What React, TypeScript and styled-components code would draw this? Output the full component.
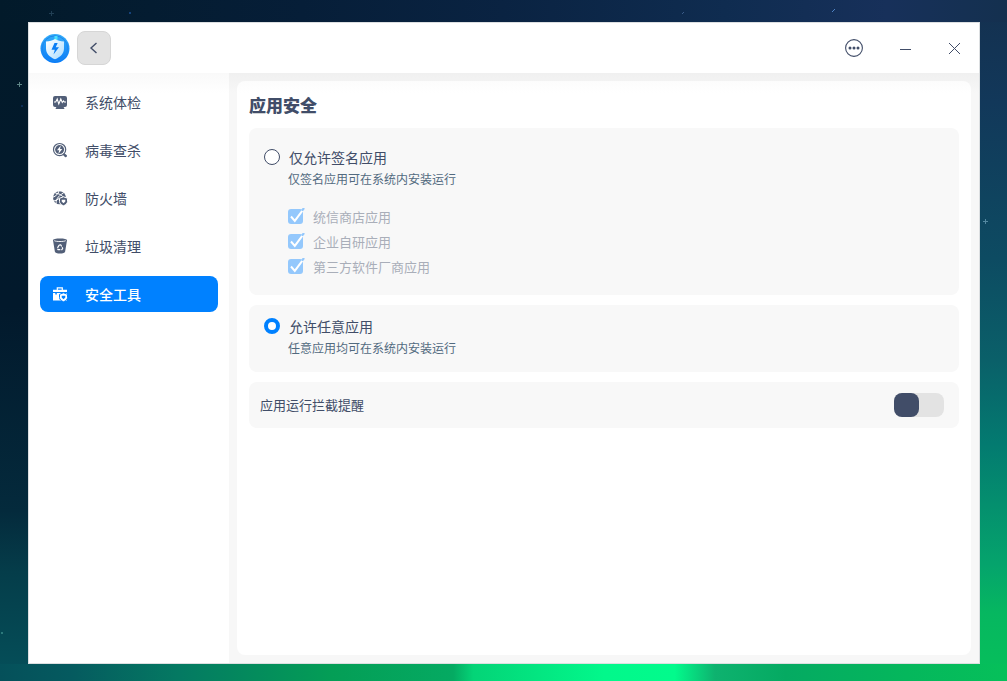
import React, { useState } from "react";
import styled, { createGlobalStyle } from "styled-components";

const ink = "#414d68";
const accent = "#0081ff";

const GlobalStyle = createGlobalStyle`
  * { box-sizing: border-box; }
  body {
    margin: 0;
    font-family: "Noto Sans CJK SC", "Noto Sans", sans-serif;
    color: ${ink};
  }
  button { font: inherit; color: inherit; border: 0; padding: 0; background: none; cursor: pointer; }
`;

const Desktop = styled.div`
  position: relative;
  display: flex;
  min-height: 100vh;
  padding: 22px 27px 17px 28px;
  overflow: hidden;
  background:
    linear-gradient(90deg, #021a2a 0%, #061e38 30%, #0a2342 50%, #0f2c50 72%, #17305a 88%, #14304f 100%) top / 100% 22px no-repeat,
    linear-gradient(90deg, #05505a 0%, #055a5f 7%, #047a62 18%, #049e56 33%, #05aa62 45%, #04d477 47%, #02f88b 60%, #02fb8c 67%, #0eb26f 71%, #05aa62 78%, #05b75c 90%, #06c05a 100%) bottom / 100% 17px no-repeat,
    linear-gradient(180deg, #021a2a 0%, #02192c 45%, #042a3c 75%, #053d4a 84%, #05505a 100%) left / 28px 100% no-repeat,
    linear-gradient(180deg, #14304f 0%, #12385a 15%, #0d4b62 38%, #0a6069 53%, #037a70 65%, #05a46c 83%, #06b760 90%, #06c05a 100%) right / 27px 100% no-repeat,
    #04303f;
`;

const Stars = styled.svg`
  position: absolute;
  inset: 0;
  width: 100%;
  height: 100%;
  pointer-events: none;
`;

const Window = styled.div`
  position: relative;
  flex: 1;
  min-width: 0;
  display: flex;
  flex-direction: column;
  border: 1px solid #dcdfe1;
  background: #fff;
`;

const TitleBar = styled.header`
  display: flex;
  align-items: center;
  height: 50px;
  padding-left: 11px;
  gap: 7px;
`;

const Logo = styled.svg`
  width: 30px;
  height: 30px;
`;

const BackButton = styled.button`
  display: grid;
  place-items: center;
  width: 34px;
  height: 34px;
  border: 1px solid #d6d6d6;
  border-radius: 8px;
  background: #e3e3e3;
`;

const WindowControls = styled.div`
  display: flex;
  height: 100%;
  margin-left: auto;
`;

const ControlButton = styled.button`
  display: grid;
  place-items: center;
  width: 50px;
`;

const Body = styled.div`
  flex: 1;
  display: flex;
`;

const Sidebar = styled.nav`
  flex: 0 0 200px;
  display: flex;
  flex-direction: column;
  gap: 12px;
  padding: 11px;
  background: linear-gradient(180deg, #f9f9f9, #fff 20px);
`;

const NavItem = styled.a<{ $active: boolean }>`
  display: flex;
  align-items: center;
  gap: 17px;
  height: 36px;
  padding: 0 12px;
  border-radius: 8px;
  font-size: 14px;
  line-height: 20px;
  font-weight: ${(p) => (p.$active ? 500 : 400)};
  text-decoration: none;
  color: ${(p) => (p.$active ? "#fff" : ink)};
  background: ${(p) => (p.$active ? accent : "transparent")};
`;

const NavIcon = styled.svg<{ $active: boolean }>`
  flex: none;
  width: 16px;
  height: 16px;
  color: ${(p) => (p.$active ? "#fff" : "#525f78")};
`;

const Main = styled.main`
  flex: 1;
  min-width: 0;
  display: flex;
  padding: 8px;
  background: linear-gradient(180deg, #f0f0f0, #f7f7f7 20px);
`;

const Page = styled.section`
  flex: 1;
  display: flex;
  flex-direction: column;
  gap: 10px;
  padding: 12px;
  border-radius: 8px;
  background: linear-gradient(180deg, #fcfcfc, #fff 12px);
`;

const Title = styled.h1`
  margin: 0;
  padding-bottom: 2px;
  font-size: 17px;
  line-height: 23px;
  font-weight: 900;
`;

const Card = styled.div<{ $pad: string }>`
  padding: ${(p) => p.$pad};
  border-radius: 8px;
  background: #f8f8f8;
`;

const RadioRow = styled.label`
  display: flex;
  align-items: center;
  gap: 9px;
  font-size: 14px;
  line-height: 22px;
`;

const Radio = styled.input`
  appearance: none;
  width: 16px;
  height: 16px;
  margin: 0;
  border: 1px solid ${ink};
  border-radius: 50%;
  background: #fff;
  &:checked {
    border: 4px solid ${accent};
  }
`;

const Description = styled.p`
  margin: 0;
  padding-left: 24px;
  font-size: 12px;
  line-height: 22px;
  color: #526a7f;
`;

const CheckList = styled.div`
  display: flex;
  flex-direction: column;
  padding: 14px 0 0 24px;
`;

const CheckRow = styled.label`
  display: flex;
  align-items: center;
  gap: 8px;
  font-size: 13px;
  line-height: 25px;
  color: #a9aeb9;
`;

const CheckBox = styled.span`
  display: grid;
  width: 17px;
  height: 17px;
  > * { grid-area: 1 / 1; }
  input { margin: 0; opacity: 0; }
  svg { pointer-events: none; }
`;

const SwitchRow = styled.label`
  display: flex;
  align-items: center;
  justify-content: space-between;
  font-size: 13px;
  line-height: 24px;
`;

const Switch = styled.input`
  appearance: none;
  display: flex;
  width: 50px;
  height: 24px;
  margin: 0;
  border-radius: 8px;
  background: #e3e3e3;
  &::before {
    content: "";
    width: 25px;
    height: 24px;
    border-radius: 8px;
    background: ${ink};
  }
  &:checked {
    justify-content: flex-end;
  }
  &:checked::before {
    background: ${accent};
  }
`;

const miniShield = "M11.500 6.800 15.500 8.300v3.200c0 2-1.600 3.300-4 4.300-2.400-1-4-2.300-4-4.300V8.300z";
const miniHeart = "M9.700 9.800h3.600v1.600l-1.800 1.900-1.800-1.900z";

const icons = {
  health: (
    <>
      <path fill="currentColor" d="M3 2h10a2 2 0 0 1 2 2v7a2 2 0 0 1-2 2h-1.500l.8 1v1H3.700v-1l.8-1H3a2 2 0 0 1-2-2V4a2 2 0 0 1 2-2z" />
      <path fill="none" stroke="#fff" strokeWidth="1.100" d="M2 8h1.700l1.500-3 1.600 5 2-5 1.500 3.500L11.500 7l.8 1H14" />
    </>
  ),
  virus: (
    <>
      <circle cx="7.600" cy="7.600" r="6.100" fill="none" stroke="currentColor" strokeWidth="1.200" />
      <circle cx="7.600" cy="7.600" r="4.500" fill="currentColor" />
      <path fill="#fff" d="M8.800 3.400 5 8.300h2.200l-.9 3.700 4-4.900H8z" />
      <path stroke="currentColor" strokeWidth="2.400" strokeLinecap="round" d="m12.200 12.600 1.600 1.400" />
    </>
  ),
  firewall: (
    <>
      <circle cx="7.500" cy="7.800" r="6.500" fill="currentColor" />
      <g fill="none" stroke="#fff" strokeWidth="1">
        <path d="M1 7.200c3-1.200 5-3 6-6.200M3.500 3.200c3.500.3 6.500 1.800 8.500 4.500M4.200 14.500c-.8-4 1.500-8.500 7.300-11.500M1 10.800c2.500 0 4.500-.8 6.500-2.800" />
      </g>
      <path fill="currentColor" stroke="#fff" strokeWidth="1" d={miniShield} />
      <path fill="#fff" d={miniHeart} />
    </>
  ),
  trash: (
    <>
      <path fill="currentColor" d="M1 2.300C1 1 4 .5 8 .5s7 .5 7 1.800l-1.900 11.400c-.2 1.200-2.300 1.800-5.100 1.800s-4.900-.6-5.100-1.800z" />
      <path fill="none" stroke="#fff" strokeWidth=".9" d="M2.300 2.700c1.700 1.100 9.700 1.100 11.400 0" />
      <path fill="none" stroke="#fff" strokeWidth="1.200" strokeLinejoin="round" strokeDasharray="3.400 .9" d="M7.300 6.800h1.400l2 3.500-.8 1.400H6.100l-.8-1.400z" />
    </>
  ),
  tools: (
    <>
      <path fill="none" stroke="currentColor" strokeWidth="1.200" d="M5.300 4V1.800h5V4" />
      <path fill="currentColor" d="M1 3.700h14v2.400H1zM1 7h2.300v1.400h1.500V7h10.200v7.500H1z" />
      <path fill="currentColor" stroke={accent} strokeWidth="1" d={miniShield} />
      <path fill={accent} d={miniHeart} />
    </>
  ),
};

const navItems: { id: keyof typeof icons; label: string }[] = [
  { id: "health", label: "系统体检" },
  { id: "virus", label: "病毒查杀" },
  { id: "firewall", label: "防火墙" },
  { id: "trash", label: "垃圾清理" },
  { id: "tools", label: "安全工具" },
];

const sources = ["统信商店应用", "企业自研应用", "第三方软件厂商应用"];

function AppLogo() {
  return (
    <Logo viewBox="0 0 30 30" aria-hidden="true">
      <defs>
        <linearGradient id="disc" x1="0" y1="0" x2="0" y2="1">
          <stop offset="0" stopColor="#36aef8" />
          <stop offset="1" stopColor="#067bfa" />
        </linearGradient>
        <linearGradient id="shield" x1="0" y1="0" x2="1" y2="1">
          <stop offset="0" stopColor="#ffffff" />
          <stop offset="1" stopColor="#a9dcff" />
        </linearGradient>
      </defs>
      <circle cx="15" cy="15.500" r="14.500" fill="url(#disc)" />
      <circle cx="15" cy="15.500" r="12.700" fill="none" stroke="#1d86ee" strokeWidth="1" />
      <path d="M16 3v4" stroke="#4de0fb" strokeWidth="3" />
      <path fill="url(#shield)" d="M15 6c2.500 1.500 5.500 2.300 9 2.500v7c0 5-3.500 8.500-9 10.800C9.500 24 6 20.500 6 15.500v-7C9.500 8.300 12.500 7.500 15 6z" />
      <path fill="#087df5" d="m14.500 10-3 6.800h3.300l-1.300 4.700 5.500-7.300h-3.300l2-4.200z" />
    </Logo>
  );
}

function CheckMark() {
  return (
    <svg width="17" height="17" viewBox="0 0 17 17" aria-hidden="true">
      <rect x="0" y="1" width="15" height="15" rx="3" fill="#94c8fc" />
      <path d="m3 8.500 3.800 4.300 8.200-11" fill="none" stroke="#fff" strokeWidth="2" />
      <path d="m14.500 2 1-1.200" stroke="#94c8fc" strokeWidth="2.200" strokeLinecap="round" />
    </svg>
  );
}

export default function App() {
  const [policy, setPolicy] = useState("any");
  const [notify, setNotify] = useState(false);
  const [active, setActive] = useState("tools");

  return (
    <>
      <GlobalStyle />
      <Desktop>
        <Stars aria-hidden="true">
          <path d="M17 84.500h5M19.500 82v5" stroke="#5f8688" />
          <path d="M49 13.500h5M51.500 11v5" stroke="#213f54" />
          <circle cx="130" cy="13" r="1" fill="#1d4f92" />
          <circle cx="22" cy="106" r="1" fill="#123464" />
          <path d="m832 12 3-3" stroke="#4f83c4" />
          <path d="m682 14 2-2" stroke="#3a5c8a" />
          <path d="M983 221.500h5M985.500 219v5" stroke="#5488a0" />
          <circle cx="2" cy="633" r="1" fill="#3a8a88" />
        </Stars>
        <Window>
          <TitleBar>
            <AppLogo />
            <BackButton aria-label="返回">
              <svg width="16" height="16" fill="none" stroke={ink} strokeWidth="1.400" aria-hidden="true">
                <path d="M10.500 3 5 8l5.500 5" />
              </svg>
            </BackButton>
            <WindowControls>
              <ControlButton aria-label="菜单">
                <svg width="18" height="18" fill={ink} aria-hidden="true">
                  <circle cx="9" cy="9" r="8.400" fill="none" stroke={ink} strokeWidth="1.100" />
                  <circle cx="5" cy="9" r="1.500" />
                  <circle cx="9" cy="9" r="1.500" />
                  <circle cx="13" cy="9" r="1.500" />
                </svg>
              </ControlButton>
              <ControlButton aria-label="最小化">
                <svg width="16" height="16" stroke={ink} aria-hidden="true">
                  <path d="M4 9.500h11" />
                </svg>
              </ControlButton>
              <ControlButton aria-label="关闭">
                <svg width="16" height="16" stroke={ink} aria-hidden="true">
                  <path d="m3 3 11 11M14 3 3 14" />
                </svg>
              </ControlButton>
            </WindowControls>
          </TitleBar>
          <Body>
            <Sidebar>
              {navItems.map(({ id, label }) => (
                <NavItem key={id} href={`#${id}`} $active={id === active} onClick={() => setActive(id)}>
                  <NavIcon $active={id === active} viewBox="0 0 16 16" aria-hidden="true">{icons[id]}</NavIcon>
                  {label}
                </NavItem>
              ))}
            </Sidebar>
            <Main>
              <Page>
                <Title>应用安全</Title>
                <Card $pad="18px 15px 16px">
                  <RadioRow>
                    <Radio type="radio" name="policy" checked={policy === "signed"} onChange={() => setPolicy("signed")} />
                    仅允许签名应用
                  </RadioRow>
                  <Description>仅签名应用可在系统内安装运行</Description>
                  <CheckList>
                    {sources.map((name) => (
                      <CheckRow key={name}>
                        <CheckBox>
                          <input type="checkbox" defaultChecked disabled />
                          <CheckMark />
                        </CheckBox>
                        {name}
                      </CheckRow>
                    ))}
                  </CheckList>
                </Card>
                <Card $pad="10px 15px 13px">
                  <RadioRow>
                    <Radio type="radio" name="policy" checked={policy === "any"} onChange={() => setPolicy("any")} />
                    允许任意应用
                  </RadioRow>
                  <Description>任意应用均可在系统内安装运行</Description>
                </Card>
                <Card $pad="11px 15px 11px 11px">
                  <SwitchRow>
                    应用运行拦截提醒
                    <Switch type="checkbox" role="switch" checked={notify} onChange={(e) => setNotify(e.target.checked)} />
                  </SwitchRow>
                </Card>
              </Page>
            </Main>
          </Body>
        </Window>
      </Desktop>
    </>
  );
}
